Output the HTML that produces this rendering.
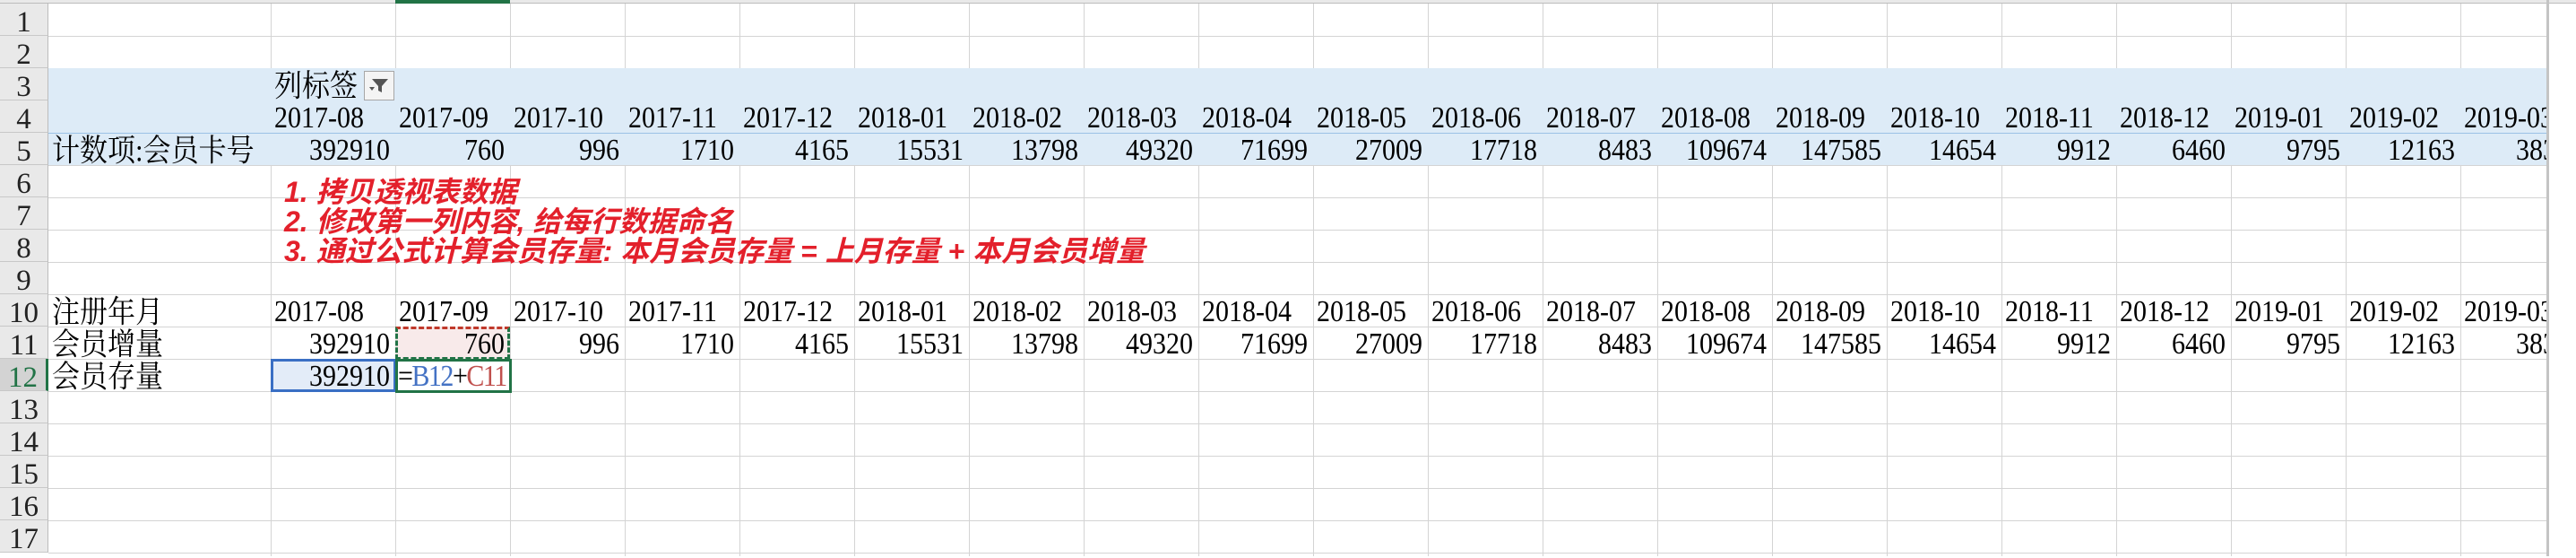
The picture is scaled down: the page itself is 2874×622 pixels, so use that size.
<!DOCTYPE html>
<html><head><meta charset="utf-8"><style>
body{margin:0;width:2874px;height:620px;overflow:hidden;background:#fff;position:relative;font-family:"Liberation Serif","Noto Serif CJK SC",serif;}
div{position:absolute;box-sizing:border-box;}
.h{left:54px;width:2787px;height:1px;background:#d4d4d4;}
.v{top:4px;height:616px;width:1px;background:#d4d4d4;}
.rh{left:0;width:54px;height:36px;background:#e9e9e9;border-bottom:1px solid #c8c8c8;border-right:1px solid #bcbcbc;text-align:center;font-size:33px;line-height:42px;color:#222;}
.t{height:36px;line-height:42px;font-size:30px;white-space:nowrap;overflow:hidden;color:#000;transform:scaleY(1.12);transform-origin:50% 80%;}
.r{width:122px;text-align:right;}
.l{width:128px;padding-left:4px;}
.cn{font-family:"Liberation Serif","Noto Serif CJK SC",serif;font-size:31px;}
.red{left:317px;font-family:"Liberation Sans","Noto Sans CJK SC",sans-serif;font-weight:bold;font-style:italic;font-size:32px;color:#e3202b;line-height:33px;height:33px;white-space:nowrap;}
.clip{left:2745px;top:0;width:96px;height:620px;overflow:hidden;}
</style></head><body>
<div style="left:0;top:0;width:2841px;height:4px;background:#e9e9e9;border-bottom:1px solid #bcbcbc"></div>
<div style="left:441px;top:0;width:128px;height:4px;background:#217346"></div>
<div class="v" style="left:302px"></div><div class="v" style="left:441px"></div><div class="v" style="left:569px"></div><div class="v" style="left:697px"></div><div class="v" style="left:825px"></div><div class="v" style="left:953px"></div><div class="v" style="left:1081px"></div><div class="v" style="left:1209px"></div><div class="v" style="left:1337px"></div><div class="v" style="left:1465px"></div><div class="v" style="left:1593px"></div><div class="v" style="left:1721px"></div><div class="v" style="left:1849px"></div><div class="v" style="left:1977px"></div><div class="v" style="left:2105px"></div><div class="v" style="left:2233px"></div><div class="v" style="left:2361px"></div><div class="v" style="left:2489px"></div><div class="v" style="left:2617px"></div><div class="v" style="left:2745px"></div>
<div class="h" style="top:40px"></div><div class="h" style="top:76px"></div><div class="h" style="top:112px"></div><div class="h" style="top:148px"></div><div class="h" style="top:184px"></div><div class="h" style="top:220px"></div><div class="h" style="top:256px"></div><div class="h" style="top:292px"></div><div class="h" style="top:328px"></div><div class="h" style="top:364px"></div><div class="h" style="top:400px"></div><div class="h" style="top:436px"></div><div class="h" style="top:472px"></div><div class="h" style="top:508px"></div><div class="h" style="top:544px"></div><div class="h" style="top:580px"></div><div class="h" style="top:616px"></div>
<div style="left:54px;top:76px;width:2787px;height:108px;background:#ddebf7"></div>
<div style="left:54px;top:148px;width:2787px;height:1px;background:#9bc2e6"></div>
<div style="left:2841px;top:0;width:3px;height:620px;background:#c4c4c4"></div>
<div style="left:2844px;top:0;width:30px;height:4px;background:#e9e9e9;border-bottom:1px solid #bcbcbc"></div>
<div class="rh" style="top:4px">1</div><div class="rh" style="top:40px">2</div><div class="rh" style="top:76px">3</div><div class="rh" style="top:112px">4</div><div class="rh" style="top:148px">5</div><div class="rh" style="top:184px">6</div><div class="rh" style="top:220px">7</div><div class="rh" style="top:256px">8</div><div class="rh" style="top:292px">9</div><div class="rh" style="top:328px">10</div><div class="rh" style="top:364px">11</div><div class="rh" style="top:400px;background:#d3d3d3;color:#217346;border-right:3px solid #217346">12</div><div class="rh" style="top:436px">13</div><div class="rh" style="top:472px">14</div><div class="rh" style="top:508px">15</div><div class="rh" style="top:544px">16</div><div class="rh" style="top:580px">17</div>
<div class="t cn" style="left:306px;top:76px;width:100px">列标签</div>
<div style="left:406px;top:79px;width:34px;height:33px;border:1px solid #a6a6a6;background:#f4f4f4">
<svg width="32" height="31" viewBox="0 0 32 31"><path d="M8 8 H26 L19 16 V23 L15 21 V16 Z" fill="#555"/><path d="M5 17 h6 l-3 4z" fill="#555"/></svg></div>
<div style="left:441px;top:364px;width:128px;height:37px;background:#f8eaea;border:3px dashed #217346;border-top-color:#c0392b"></div>
<div style="left:302px;top:400px;width:140px;height:37px;background:#e3ecf8;border:3px solid #3a6fc4"></div>
<div style="left:441px;top:400px;width:130px;height:38px;border:3px solid #217346"></div>
<div class="t l" style="left:302px;top:112px">2017-08</div><div class="t l" style="left:441px;top:112px">2017-09</div><div class="t l" style="left:569px;top:112px">2017-10</div><div class="t l" style="left:697px;top:112px">2017-11</div><div class="t l" style="left:825px;top:112px">2017-12</div><div class="t l" style="left:953px;top:112px">2018-01</div><div class="t l" style="left:1081px;top:112px">2018-02</div><div class="t l" style="left:1209px;top:112px">2018-03</div><div class="t l" style="left:1337px;top:112px">2018-04</div><div class="t l" style="left:1465px;top:112px">2018-05</div><div class="t l" style="left:1593px;top:112px">2018-06</div><div class="t l" style="left:1721px;top:112px">2018-07</div><div class="t l" style="left:1849px;top:112px">2018-08</div><div class="t l" style="left:1977px;top:112px">2018-09</div><div class="t l" style="left:2105px;top:112px">2018-10</div><div class="t l" style="left:2233px;top:112px">2018-11</div><div class="t l" style="left:2361px;top:112px">2018-12</div><div class="t l" style="left:2489px;top:112px">2019-01</div><div class="t l" style="left:2617px;top:112px">2019-02</div>
<div class="t cn" style="left:58px;top:148px;width:244px">计数项:会员卡号</div>
<div class="t r" style="left:313px;top:148px">392910</div><div class="t r" style="left:441px;top:148px">760</div><div class="t r" style="left:569px;top:148px">996</div><div class="t r" style="left:697px;top:148px">1710</div><div class="t r" style="left:825px;top:148px">4165</div><div class="t r" style="left:953px;top:148px">15531</div><div class="t r" style="left:1081px;top:148px">13798</div><div class="t r" style="left:1209px;top:148px">49320</div><div class="t r" style="left:1337px;top:148px">71699</div><div class="t r" style="left:1465px;top:148px">27009</div><div class="t r" style="left:1593px;top:148px">17718</div><div class="t r" style="left:1721px;top:148px">8483</div><div class="t r" style="left:1849px;top:148px">109674</div><div class="t r" style="left:1977px;top:148px">147585</div><div class="t r" style="left:2105px;top:148px">14654</div><div class="t r" style="left:2233px;top:148px">9912</div><div class="t r" style="left:2361px;top:148px">6460</div><div class="t r" style="left:2489px;top:148px">9795</div><div class="t r" style="left:2617px;top:148px">12163</div>
<div class="red" style="top:198px">1. 拷贝透视表数据</div>
<div class="red" style="top:231px">2. 修改第一列内容, 给每行数据命名</div>
<div class="red" style="top:264px">3. 通过公式计算会员存量: 本月会员存量 = 上月存量 + 本月会员增量</div>
<div class="t cn" style="left:58px;top:328px;width:244px">注册年月</div>
<div class="t l" style="left:302px;top:328px">2017-08</div><div class="t l" style="left:441px;top:328px">2017-09</div><div class="t l" style="left:569px;top:328px">2017-10</div><div class="t l" style="left:697px;top:328px">2017-11</div><div class="t l" style="left:825px;top:328px">2017-12</div><div class="t l" style="left:953px;top:328px">2018-01</div><div class="t l" style="left:1081px;top:328px">2018-02</div><div class="t l" style="left:1209px;top:328px">2018-03</div><div class="t l" style="left:1337px;top:328px">2018-04</div><div class="t l" style="left:1465px;top:328px">2018-05</div><div class="t l" style="left:1593px;top:328px">2018-06</div><div class="t l" style="left:1721px;top:328px">2018-07</div><div class="t l" style="left:1849px;top:328px">2018-08</div><div class="t l" style="left:1977px;top:328px">2018-09</div><div class="t l" style="left:2105px;top:328px">2018-10</div><div class="t l" style="left:2233px;top:328px">2018-11</div><div class="t l" style="left:2361px;top:328px">2018-12</div><div class="t l" style="left:2489px;top:328px">2019-01</div><div class="t l" style="left:2617px;top:328px">2019-02</div>
<div class="t cn" style="left:58px;top:364px;width:244px">会员增量</div>
<div class="t r" style="left:313px;top:364px">392910</div><div class="t r" style="left:441px;top:364px">760</div><div class="t r" style="left:569px;top:364px">996</div><div class="t r" style="left:697px;top:364px">1710</div><div class="t r" style="left:825px;top:364px">4165</div><div class="t r" style="left:953px;top:364px">15531</div><div class="t r" style="left:1081px;top:364px">13798</div><div class="t r" style="left:1209px;top:364px">49320</div><div class="t r" style="left:1337px;top:364px">71699</div><div class="t r" style="left:1465px;top:364px">27009</div><div class="t r" style="left:1593px;top:364px">17718</div><div class="t r" style="left:1721px;top:364px">8483</div><div class="t r" style="left:1849px;top:364px">109674</div><div class="t r" style="left:1977px;top:364px">147585</div><div class="t r" style="left:2105px;top:364px">14654</div><div class="t r" style="left:2233px;top:364px">9912</div><div class="t r" style="left:2361px;top:364px">6460</div><div class="t r" style="left:2489px;top:364px">9795</div><div class="t r" style="left:2617px;top:364px">12163</div>
<div class="clip">
<div class="t l" style="left:0;top:112px">2019-03</div>
<div class="t r" style="left:0;top:148px">3837</div>
<div class="t l" style="left:0;top:328px">2019-03</div>
<div class="t r" style="left:0;top:364px">3837</div>
</div>
<div class="t cn" style="left:58px;top:400px;width:244px">会员存量</div>
<div class="t r" style="left:313px;top:400px">392910</div>
<div class="t" style="left:444px;top:400px;width:126px;letter-spacing:-1.5px">=<span style="color:#4472c4">B12</span>+<span style="color:#c0504d">C11</span></div>
</body></html>
